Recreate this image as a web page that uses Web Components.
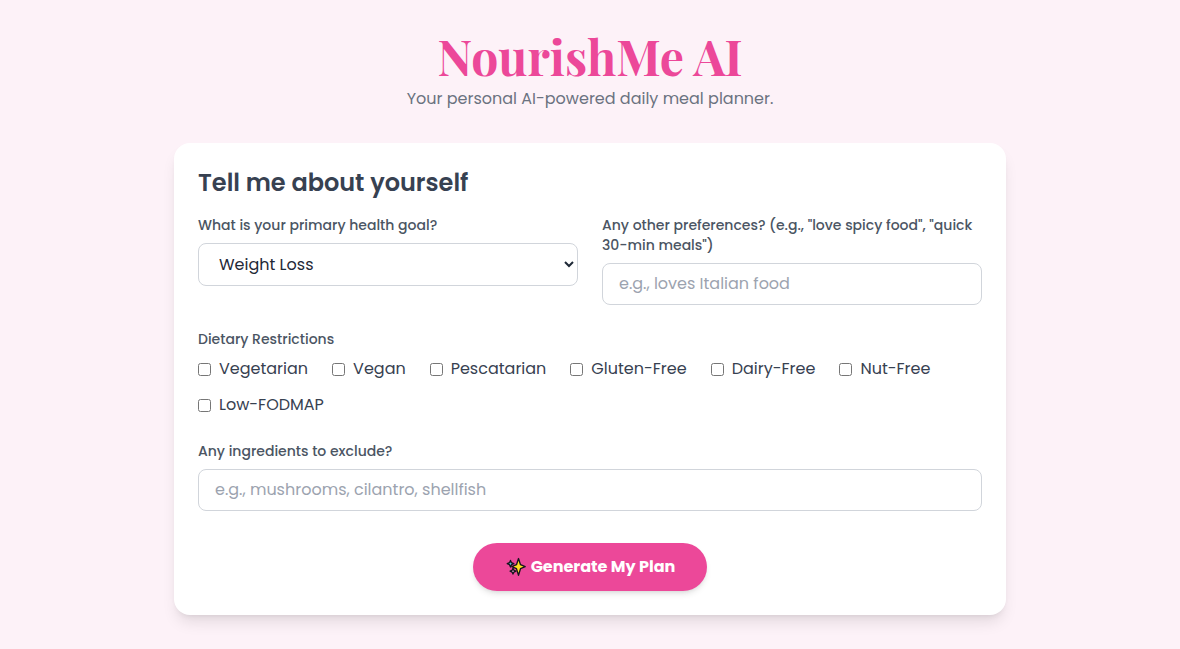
<!DOCTYPE html>
<html lang="en">
<head>
  <meta charset="UTF-8">
  <meta name="viewport" content="width=device-width, initial-scale=1.0">
  <title>NourishMe AI</title>
  <style>
    body {
      margin: 0;
      min-height: 100vh;
      background-color: #fdf2f8;
      color: #374151;
      font-family: Poppins, Inter, sans-serif;
      font-size: 16px;
      line-height: 24px;
    }
  </style>
</head>
<body>
  <planner-page>
    <planner-header slot="header"></planner-header>
    <planner-card heading="Tell me about yourself">
      <field-row>
        <select-field label="What is your primary health goal?" options="Weight Loss|Muscle Gain|Maintenance|General Wellness"></select-field>
        <text-field label='Any other preferences? (e.g., "love spicy food", "quick 30-min meals")' placeholder="e.g., loves Italian food"></text-field>
      </field-row>
      <check-group label="Dietary Restrictions" options="Vegetarian|Vegan|Pescatarian|Gluten-Free|Dairy-Free|Nut-Free|Low-FODMAP"></check-group>
      <text-field label="Any ingredients to exclude?" placeholder="e.g., mushrooms, cilantro, shellfish"></text-field>
      <generate-button slot="action">Generate My Plan</generate-button>
    </planner-card>
  </planner-page>

  <script>
    // Label and control styles shared by all the fields
    const fieldStyles = `
      :host {
        display: block;
        min-width: 0;
      }
      * {
        box-sizing: border-box;
      }
      .label {
        display: block;
        margin: 0 0 8px;
        padding: 0;
        color: #4b5563;
        font-size: 14px;
        font-weight: 500;
        line-height: 20px;
      }
      .control {
        display: block;
        width: 100%;
        padding: 8px 16px;
        border: 1px solid #d1d5db;
        border-radius: 8px;
        background-color: white;
        color: #1f2937;
        font-family: inherit;
        font-size: 16px;
        line-height: 24px;
      }
      .control:focus {
        outline: 2px solid #f472b6;
      }
    `;

    class PlannerPage extends HTMLElement {
      connectedCallback() {
        this.attachShadow({ mode: 'open' });
        this.shadowRoot.innerHTML = `
          <style>
            :host {
              display: block;
              box-sizing: border-box;
              max-width: 896px;
              margin: 0 auto;
              padding: 32px;
            }
            main {
              margin-top: 32px;
            }
          </style>
          <slot name="header"></slot>
          <main><slot></slot></main>
        `;
      }
    }
    customElements.define('planner-page', PlannerPage);

    class PlannerHeader extends HTMLElement {
      connectedCallback() {
        this.attachShadow({ mode: 'open' });
        this.shadowRoot.innerHTML = `
          <style>
            :host {
              display: block;
              text-align: center;
            }
            h1 {
              margin: 0 0 7px;
              color: #ec4899;
              font-family: "Playfair Display", "Liberation Serif", serif;
              font-size: 48px;
              font-weight: 700;
              line-height: 48px;
            }
            p {
              margin: 0;
              color: #6b7280;
            }
          </style>
          <header>
            <h1>NourishMe AI</h1>
            <p>Your personal AI-powered daily meal planner.</p>
          </header>
        `;
      }
    }
    customElements.define('planner-header', PlannerHeader);

    class PlannerCard extends HTMLElement {
      connectedCallback() {
        this.attachShadow({ mode: 'open' });
        this.shadowRoot.innerHTML = `
          <style>
            :host {
              display: block;
              padding: 24px;
              border-radius: 16px;
              background-color: white;
              box-shadow: 0 10px 15px -3px rgba(0, 0, 0, 0.1), 0 4px 6px -4px rgba(0, 0, 0, 0.1);
            }
            h2 {
              margin: 0 0 16px;
              font-size: 24px;
              font-weight: 600;
              line-height: 32px;
            }
            .fields {
              display: grid;
              gap: 24px;
            }
            .action {
              display: flex;
              justify-content: center;
              margin-top: 32px;
            }
          </style>
          <h2>${this.getAttribute('heading')}</h2>
          <div class="fields"><slot></slot></div>
          <div class="action"><slot name="action"></slot></div>
        `;
      }
    }
    customElements.define('planner-card', PlannerCard);

    class FieldRow extends HTMLElement {
      connectedCallback() {
        this.attachShadow({ mode: 'open' });
        this.shadowRoot.innerHTML = `
          <style>
            :host {
              display: grid;
              grid-template-columns: 1fr 1fr;
              align-items: start;
              gap: 24px;
            }
            @media (max-width: 768px) {
              :host {
                grid-template-columns: 1fr;
              }
            }
          </style>
          <slot></slot>
        `;
      }
    }
    customElements.define('field-row', FieldRow);

    class SelectField extends HTMLElement {
      connectedCallback() {
        const options = this.getAttribute('options').split('|');
        this.attachShadow({ mode: 'open' });
        this.shadowRoot.innerHTML = `
          <style>${fieldStyles}</style>
          <label class="label" for="control">${this.getAttribute('label')}</label>
          <select class="control" id="control">
            ${options.map((option) => `<option>${option}</option>`).join('')}
          </select>
        `;
      }
    }
    customElements.define('select-field', SelectField);

    class TextField extends HTMLElement {
      connectedCallback() {
        this.attachShadow({ mode: 'open' });
        this.shadowRoot.innerHTML = `
          <style>
            ${fieldStyles}
            .control::placeholder {
              color: #9ca3af;
            }
          </style>
          <label class="label" for="control">${this.getAttribute('label')}</label>
          <input class="control" id="control" type="text" placeholder="${this.getAttribute('placeholder')}">
        `;
      }
    }
    customElements.define('text-field', TextField);

    class CheckGroup extends HTMLElement {
      connectedCallback() {
        const options = this.getAttribute('options').split('|');
        this.attachShadow({ mode: 'open' });
        this.shadowRoot.innerHTML = `
          <style>
            ${fieldStyles}
            fieldset {
              margin: 0;
              padding: 0;
              border: 0;
            }
            .options {
              display: flex;
              flex-wrap: wrap;
              gap: 12px 24px;
            }
            .option {
              display: flex;
              align-items: center;
              gap: 8px;
            }
            input {
              width: 13px;
              height: 13px;
              margin: 0;
              accent-color: #ec4899;
            }
          </style>
          <fieldset>
            <legend class="label">${this.getAttribute('label')}</legend>
            <div class="options">
              ${options.map((option) => `
                <label class="option"><input type="checkbox" value="${option}"><span>${option}</span></label>
              `).join('')}
            </div>
          </fieldset>
        `;
      }
    }
    customElements.define('check-group', CheckGroup);

    class GenerateButton extends HTMLElement {
      connectedCallback() {
        this.attachShadow({ mode: 'open' });
        this.shadowRoot.innerHTML = `
          <style>
            :host {
              display: block;
            }
            button {
              display: flex;
              align-items: center;
              gap: 4px;
              padding: 12px 32px;
              border: 0;
              border-radius: 9999px;
              background-color: #ec4899;
              color: white;
              font-family: inherit;
              font-size: 16px;
              font-weight: 700;
              line-height: 24px;
              box-shadow: 0 4px 6px -1px rgba(0, 0, 0, 0.1), 0 2px 4px -2px rgba(0, 0, 0, 0.1);
              cursor: pointer;
            }
            button:hover {
              background-color: #db2777;
            }
            svg {
              width: 22px;
              height: 20px;
            }
          </style>
          <button type="button">
            <svg viewBox="0 0 22 20" aria-hidden="true" stroke="#15151c" stroke-width="1.3" stroke-linejoin="round">
              <path fill="#5bbcd6" d="M5.500 3.400l1 2.300 2.300 1-2.300 1-1 2.300-1-2.300-2.300-1 2.300-1z"/>
              <path fill="#e5a3d0" d="M8 11.300l.9 2 2 .9-2 .9-.9 2-.9-2-2-.9 2-.9z"/>
              <path fill="#ffe11f" d="M13.500 1.500l2 6.200 4.700 2-4.700 2-2 6.600-2-6.600-4.700-2 4.700-2z"/>
            </svg>
            <span><slot></slot></span>
          </button>
        `;
      }
    }
    customElements.define('generate-button', GenerateButton);
  </script>
</body>
</html>
